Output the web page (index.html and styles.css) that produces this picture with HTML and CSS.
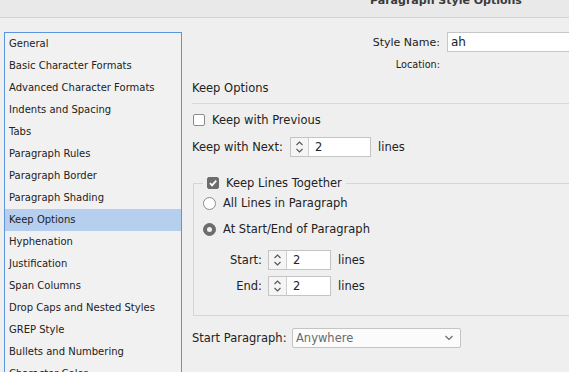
FILE: index.html
```html
<!DOCTYPE html>
<html>
<head>
<meta charset="utf-8">
<link rel="stylesheet" href="styles.css">
</head>
<body>
<div class="titlebar"><span class="title">Paragraph Style Options</span></div>
<div class="main">
  <ul class="list">
    <li>General</li>
    <li>Basic Character Formats</li>
    <li>Advanced Character Formats</li>
    <li>Indents and Spacing</li>
    <li>Tabs</li>
    <li>Paragraph Rules</li>
    <li>Paragraph Border</li>
    <li>Paragraph Shading</li>
    <li class="sel">Keep Options</li>
    <li>Hyphenation</li>
    <li>Justification</li>
    <li>Span Columns</li>
    <li>Drop Caps and Nested Styles</li>
    <li>GREP Style</li>
    <li>Bullets and Numbering</li>
    <li>Character Color</li>
  </ul>
  <div class="panel">
    <div class="name-row">
      <span class="name-label">Style Name:</span>
      <span class="text-input">ah</span>
    </div>
    <div class="loc-row"><span class="loc-label">Location:</span></div>
    <div class="heading">Keep Options</div>
    <div class="rule"></div>
    <div class="check-row">
      <span class="checkbox"></span>
      <span>Keep with Previous</span>
    </div>
    <div class="next-row">
      <span class="next-label">Keep with Next:</span>
      <span class="spinner wide">
        <span class="arrows"><svg width="9" height="14" viewBox="0 0 9 14"><path d="M1.5 5 L4.5 2 L7.5 5" fill="none" stroke="#555" stroke-width="1.1"/><path d="M1.5 9 L4.5 12 L7.5 9" fill="none" stroke="#555" stroke-width="1.1"/></svg></span>
        <span class="val">2</span>
      </span>
      <span class="unit">lines</span>
    </div>
    <fieldset class="group">
      <legend class="legend"><span class="checkbox checked"><svg width="12" height="12" viewBox="0 0 12 12"><path d="M3 6.2 L5.1 8.4 L9.2 3.6" fill="none" stroke="#fff" stroke-width="1.8"/></svg></span><span>Keep Lines Together</span></legend>
      <div class="radio-row">
        <span class="radio"></span>
        <span>All Lines in Paragraph</span>
      </div>
      <div class="radio-row second">
        <span class="radio on"><span class="dot"></span></span>
        <span>At Start/End of Paragraph</span>
      </div>
      <div class="sub-row first">
        <span class="sub-label">Start:</span>
        <span class="spinner small">
          <span class="arrows"><svg width="9" height="14" viewBox="0 0 9 14"><path d="M1.5 5 L4.5 2 L7.5 5" fill="none" stroke="#555" stroke-width="1.1"/><path d="M1.5 9 L4.5 12 L7.5 9" fill="none" stroke="#555" stroke-width="1.1"/></svg></span>
          <span class="val">2</span>
        </span>
        <span class="unit">lines</span>
      </div>
      <div class="sub-row">
        <span class="sub-label">End:</span>
        <span class="spinner small">
          <span class="arrows"><svg width="9" height="14" viewBox="0 0 9 14"><path d="M1.5 5 L4.5 2 L7.5 5" fill="none" stroke="#555" stroke-width="1.1"/><path d="M1.5 9 L4.5 12 L7.5 9" fill="none" stroke="#555" stroke-width="1.1"/></svg></span>
          <span class="val">2</span>
        </span>
        <span class="unit">lines</span>
      </div>
    </fieldset>
    <div class="para-row">
      <span class="para-label">Start Paragraph:</span>
      <span class="select">
        <span class="sel-val">Anywhere</span>
        <svg width="10" height="6" viewBox="0 0 10 6"><path d="M1.5 1 L5 4.5 L8.5 1" fill="none" stroke="#666" stroke-width="1.1"/></svg>
      </span>
    </div>
  </div>
</div>
</body>
</html>
```

FILE: styles.css
```css
* { box-sizing: border-box; }
html, body { margin: 0; padding: 0; }
body {
  width: 569px;
  height: 372px;
  overflow: hidden;
  background: #efefef;
  font-family: "DejaVu Sans", "Liberation Sans", sans-serif;
  color: #222;
  font-size: 11.5px;
}
.titlebar {
  height: 18px;
  background: #e9e9e9;
  border-bottom: 1px solid #d3d3d3;
  overflow: hidden;
  padding-left: 370px;
}
.title {
  display: block;
  margin-top: -6px;
  line-height: 14px;
  font-weight: bold;
  font-size: 11px;
  color: #3a3a3a;
  white-space: nowrap;
}
.main {
  display: flex;
  align-items: flex-start;
}
.list {
  list-style: none;
  margin: 14px 0 0 4px;
  padding: 0;
  width: 178px;
  height: 360px;
  flex: none;
  border: 1px solid #5b95de;
  background: #f1f1f1;
  font-size: 10px;
  overflow: hidden;
}
.list li {
  height: 22px;
  line-height: 22px;
  padding-left: 4px;
  white-space: nowrap;
}
.list li.sel { background: #b6cfef; }
.panel {
  flex: 1;
  padding-left: 10px;
  min-width: 0;
}
.name-row {
  display: flex;
  align-items: center;
  margin-top: 14px;
  height: 20px;
}
.name-label {
  width: 248px;
  text-align: right;
  flex: none;
  font-size: 11px;
}
.text-input {
  flex: none;
  margin-left: 7px;
  width: 200px;
  height: 20px;
  background: #fff;
  border: 1px solid #c6c6c6;
  padding-left: 3px;
  line-height: 18px;
  font-size: 12px;
}
.loc-row {
  margin-top: 6px;
  height: 14px;
  line-height: 14px;
  width: 248px;
  text-align: right;
  font-size: 9.7px;
}
.heading {
  margin-top: 8px;
  height: 16px;
  line-height: 16px;
  font-size: 11.5px;
}
.rule {
  margin-top: 7px;
  height: 1px;
  background: #d8d8d8;
}
.check-row {
  margin-top: 8px;
  display: flex;
  align-items: center;
  height: 16px;
  padding-left: 1px;
}
.checkbox {
  flex: none;
  width: 12px;
  height: 12px;
  background: #fff;
  border: 1px solid #8c8c8c;
  border-radius: 2px;
  margin-right: 7px;
  display: inline-block;
}
.checkbox.checked {
  background: #6d6d6d;
  border-color: #6d6d6d;
  position: relative;
}
.checkbox.checked svg {
  position: absolute;
  left: -1px;
  top: -1px;
}
.next-row {
  margin-top: 9px;
  display: flex;
  align-items: center;
  height: 20px;
}
.next-label { width: 98px; flex: none; }
.spinner {
  flex: none;
  display: flex;
  height: 20px;
  background: #fff;
  border: 1px solid #c4c4c4;
}
.spinner.wide { width: 81px; }
.spinner.small { width: 63px; }
.arrows {
  width: 18px;
  flex: none;
  background: #f5f5f5;
  border-right: 1px solid #cfcfcf;
  display: flex;
  align-items: center;
  justify-content: center;
}
.val {
  padding-left: 6px;
  line-height: 18px;
}
.unit { margin-left: 7px; }
.group {
  margin: 18px 0 0 1px;
  width: 420px;
  border: 1px solid #d5d5d5;
  padding: 4px 0 19px 9px;
}
.legend {
  margin-left: 0;
  padding: 0 4px;
  display: flex;
  align-items: center;
  height: 16px;
}
.radio-row {
  display: flex;
  align-items: center;
  height: 16px;
}
.radio-row.second { margin-top: 10px; }
.radio {
  flex: none;
  width: 13px;
  height: 13px;
  border-radius: 50%;
  background: #fff;
  border: 1px solid #8a8a8a;
  margin-right: 7px;
  display: flex;
  align-items: center;
  justify-content: center;
}
.radio.on {
  background: #6d6d6d;
  border-color: #6d6d6d;
}
.dot {
  width: 5px;
  height: 5px;
  border-radius: 50%;
  background: #f3f3f3;
}
.sub-row {
  display: flex;
  align-items: center;
  height: 20px;
  margin-top: 6px;
  padding-left: 19px;
}
.sub-row.first { margin-top: 13px; }
.sub-label {
  width: 40px;
  flex: none;
  text-align: right;
  margin-right: 6px;
}
.para-row {
  margin-top: 12px;
  display: flex;
  align-items: center;
  height: 20px;
}
.para-label { width: 100px; flex: none; }
.select {
  flex: none;
  width: 169px;
  height: 20px;
  background: #fbfbfb;
  border: 1px solid #c4c4c4;
  border-radius: 2px;
  display: flex;
  align-items: center;
  justify-content: space-between;
  padding: 0 6px 0 3px;
}
.sel-val { color: #6a6a6a; }
```
